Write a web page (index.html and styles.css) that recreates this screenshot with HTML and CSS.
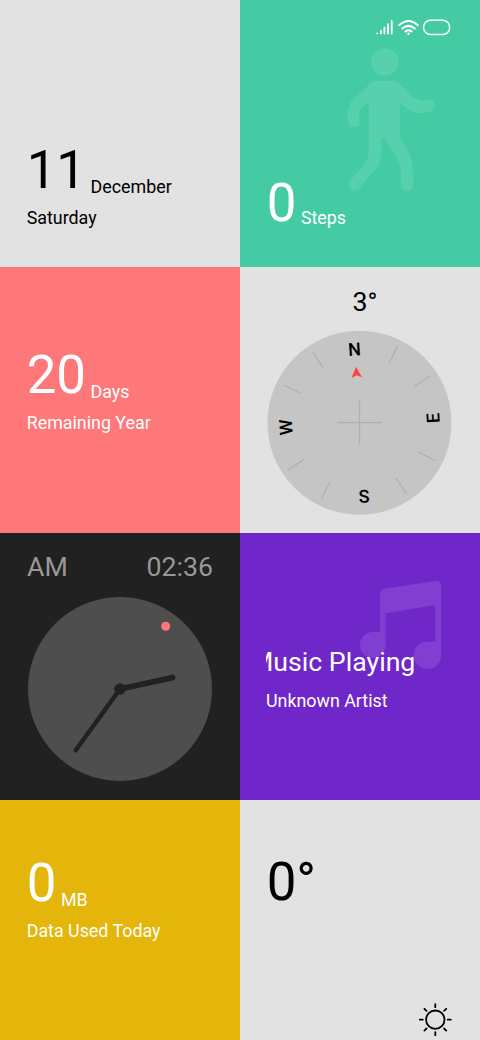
FILE: index.html
```
<!DOCTYPE html>
<html lang="en">
<head>
<meta charset="utf-8">
<title>Tiles</title>
<link rel="stylesheet" href="styles.css">
</head>
<body>
<main class="tiles">
  <section class="tile tile-date">
    <div class="figure"><span class="value">11</span><span class="unit">December</span></div>
    <div class="caption">Saturday</div>
  </section>

  <section class="tile tile-steps">
    <svg class="status" width="78" height="20" viewBox="374 18 78 20" fill="none" stroke="#fff" stroke-linecap="round">
      <path stroke-width="1.8" d="M377.200 33.300v.1M380.900 30.700v2.800M384.400 27.700v5.800M388 24.200v9.300M391.700 20.800v12.700"/>
      <path stroke-width="2" d="M399.200 25.300Q408.500 16.800 417.800 25.300M402.300 28.600Q408.500 23.100 414.700 28.600M405.400 31.500Q408.500 28.700 411.600 31.500"/>
      <circle cx="408.500" cy="33.800" r="1.200" fill="#fff" stroke="none"/>
      <rect x="423.600" y="20.200" width="26" height="14.300" rx="6.800" stroke-width="1.400"/>
    </svg>
    <svg class="walker" width="92" height="146" viewBox="345 46 92 146">
      <g fill="#57d1ad">
        <circle cx="385" cy="62" r="13.800"/>
        <path d="M375 81H394Q396.500 81 398.500 83L411 95Q418 102 426 100.500L428 100Q434 99 434.800 105Q435 110.500 429 112Q417 115 409.500 110L400 103.500V137L405 145Q413 157 413.200 173V185Q413 191 407.200 191Q401.500 191 401 185V175Q400.500 163 395 154L385 139L381.500 137.500V153Q381 163 375 170L359.500 188Q355 192.500 350.500 189Q346.500 184.500 350.500 180L364 165Q368 160 368.500 153L369 137V101L362 107.500Q359 110.500 359 115L359.600 121Q359.500 127 354.200 127Q349 127 348 121Q345.500 108 353 99.500L371 83Q373 81 375 81Z"/>
      </g>
    </svg>
    <div class="figure"><span class="value">0</span><span class="unit">Steps</span></div>
  </section>

  <section class="tile tile-year">
    <div class="figure"><span class="value">20</span><span class="unit">Days</span></div>
    <div class="caption">Remaining Year</div>
  </section>

  <section class="tile tile-compass">
    <div class="heading">3°</div>
    <svg class="dial" width="186" height="186" viewBox="-92.500 -92.700 186 186">
      <circle r="92" fill="#c5c5c5"/>
      <path d="M-22.300 0H22.300M0-22.300V22.300" stroke="#b0b0b0" stroke-width="1.300"/>
      <g transform="rotate(-3.500)">
        <path stroke="#b0b0b0" stroke-width="1.300" d="M33-57.200L42.500-73.600M57.200-33L73.600-42.500M57.200 33L73.600 42.500M33 57.200L42.500 73.600M-33 57.200L-42.500 73.600M-57.200 33L-73.600 42.500M-57.200-33L-73.600-42.500M-33-57.200L-42.500-73.600"/>
        <path d="M0-56L5.300-45.200L0-47.500L-5.300-45.200Z" fill="#ff4248"/>
        <g class="points">
          <text x="-.5" y="-67.300">N</text>
          <text y="80.200" transform="rotate(-90)">E</text>
          <text y="80.200">S</text>
          <text y="-67.300" transform="rotate(-90)">W</text>
        </g>
      </g>
    </svg>
  </section>

  <section class="tile tile-clock">
    <div class="time"><span>AM</span><span>02:36</span></div>
    <svg class="dial" width="184" height="184" viewBox="-92 -92 184 184">
      <circle r="92" fill="#4e4e4e"/>
      <circle cx="45.700" cy="-62.800" r="4.500" fill="#ff7879"/>
      <g stroke="#212121" stroke-linecap="round">
        <path d="M0 0L52.500-11.300" stroke-width="5.800"/>
        <path d="M0 0L-44.300 61.300" stroke-width="4.500"/>
      </g>
      <circle r="5.800" fill="#212121"/>
    </svg>
  </section>

  <section class="tile tile-music">
    <svg class="note" width="84" height="90" viewBox="358 580 84 90">
      <path fill="#803fd0" d="M384 588.700L435 581Q441 580.500 441 586V654A13.700 13.700 0 1 1 427.300 641.500H435.200V605L385.500 613.500V642.500A13 13 0 1 1 372 632H380V593Q380 589.500 384 588.700Z"/>
    </svg>
    <div class="marquee"><span class="track">Music Playing</span></div>
    <div class="caption">Unknown Artist</div>
  </section>

  <section class="tile tile-data">
    <div class="figure"><span class="value">0</span><span class="unit">MB</span></div>
    <div class="caption">Data Used Today</div>
  </section>

  <section class="tile tile-weather">
    <div class="figure"><span class="value">0°</span></div>
    <svg class="sun" width="34" height="34" viewBox="-17.300 -16.700 34 34" fill="none" stroke="#000" stroke-width="1.800" stroke-linecap="round">
      <circle r="9.200"/>
      <path d="M0-12.500V-15.500M0 12.500V15.500M12.500 0H15.500M-12.500 0H-15.500M8.800-8.800L10.900-10.900M8.800 8.800L10.900 10.900M-8.800 8.800L-10.900 10.900M-8.800-8.800L-10.900-10.900"/>
    </svg>
  </section>
</main>
</body>
</html>
```
FILE: styles.css
```
* { box-sizing: border-box; }

body {
  margin: 0;
  height: 1040px;
  overflow: hidden;
  font-family: Roboto, sans-serif;
  font-size: 17.85px;
  line-height: 20px;
}

.tiles {
  display: grid;
  grid-template-columns: 240px 240px;
  grid-template-rows: repeat(4, 266.67px);
}

.tile {
  position: relative;
  padding: 0 26.7px;
  color: #fff;
}

.figure { display: flex; align-items: flex-start; }
.value { font-size: 52.8px; line-height: 54px; }
.unit { margin: 34px 0 0 4.500px; }
.caption { margin-top: 11px; }

.tile-date { padding-top: 143px; background: #e2e2e2; color: #000; }

.tile-steps { padding-top: 176px; background: #45cba3; }
.tile-steps .unit { margin-top: 32px; }
.status { position: absolute; left: 134px; top: 18px; }
.walker { position: absolute; left: 105px; top: 46px; }

.tile-year { padding-top: 81px; background: #ff7879; }

.tile-compass {
  display: flex;
  flex-direction: column;
  padding: 19.330px 27px 0;
  background: #e2e2e2;
  color: #000;
}
.heading { padding-left: 85.500px; font-size: 26.7px; line-height: 32px; }
.tile-compass .dial { margin-top: 12px; }
.points { font-size: 18px; font-weight: 500; text-anchor: middle; }

.tile-clock { padding: 18px 27px 0; background: #212121; }
.time {
  display: flex;
  justify-content: space-between;
  color: #989898;
  font-size: 26.7px;
  line-height: 32px;
}
.tile-clock .dial { display: block; margin: 14px 0 0 1px; }

.tile-music { padding: 112.500px 26px 0; background: #7027c9; }
.note { position: absolute; left: 118px; top: 47px; }
.marquee {
  position: relative;
  width: 150px;
  height: 31px;
  overflow: hidden;
  font-size: 26.7px;
  line-height: 32px;
  white-space: nowrap;
}
.track { display: block; margin-left: -16px; }
.tile-music .caption { margin-top: 14px; }

.tile-data { padding-top: 56px; background: #e4b50a; }
.tile-weather { padding-top: 55.500px; background: #e2e2e2; color: #000; }
.sun { position: absolute; left: 178px; top: 203px; }
```
